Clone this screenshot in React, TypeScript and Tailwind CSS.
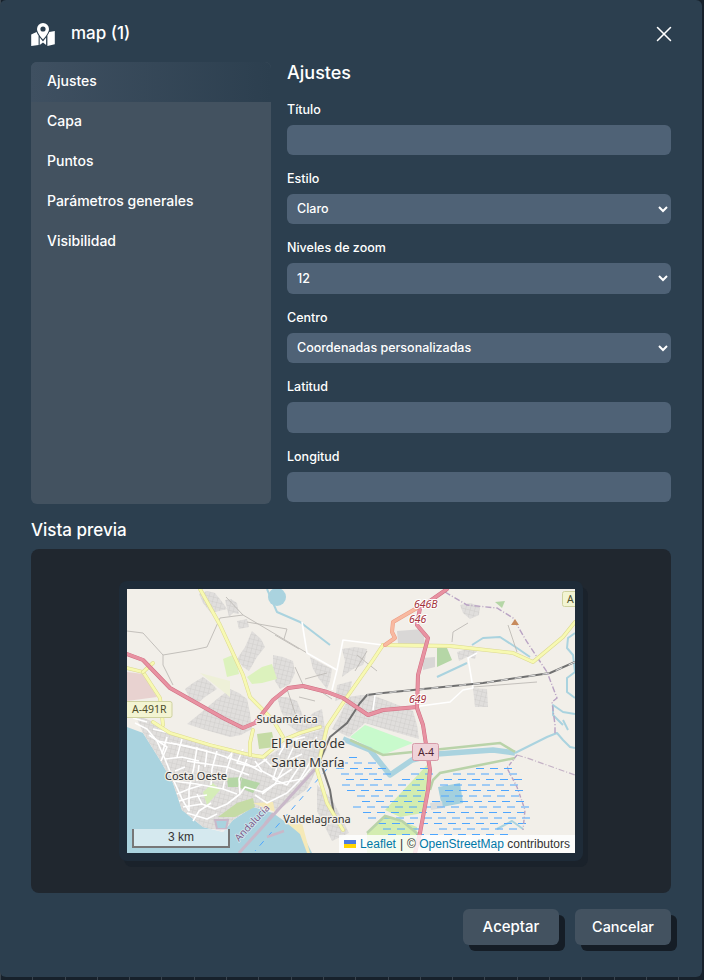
import { X } from "lucide-react";

const menuItems = ["Ajustes", "Capa", "Puntos", "Parámetros generales", "Visibilidad"];

const fields = [
  { label: "Título" },
  { label: "Estilo", value: "Claro" },
  { label: "Niveles de zoom", value: "12" },
  { label: "Centro", value: "Coordenadas personalizadas" },
  { label: "Latitud" },
  { label: "Longitud" },
];

const greyAreas = [
  "72,5 80,2 88,4 96,14 100,20 92,22 84,24 76,14",
  "98,11 104,10 110,14 112,25 106,24 102,28",
  "110,32 120,30 122,38 112,40",
  "125,42 134,50 138,58 130,68 122,82 116,78 110,70 118,58",
  "146,66 156,68 166,72 168,84 163,95 153,100 148,92 146,84",
  "183,68 194,74 205,80 203,92 200,100 192,90 186,80",
  "215,60 228,58 240,60 238,70 236,76 226,80 215,88 218,72",
  "58,100 66,94 76,88 84,94 90,100 78,108 70,115 62,108",
  "103,100 112,104 120,110 123,124 125,140 114,146 103,148 82,142 60,135 76,122 90,110",
  "222,108 234,106 245,106 266,114 286,122 290,136 292,150 264,142 238,134 222,148 205,140 214,124",
  "346,99 360,100 361,118 348,118",
  "330,63 340,60 350,62 348,70 340,68 332,72",
  "333,16 343,14 353,17 352,26 343,30 336,24",
  "150,108 160,108 170,112 178,132 186,124 195,120 198,140 186,142 175,146 160,135 154,122",
  "8,125 26,133 43,144 83,156 123,166 143,166 175,146 198,140 200,160 180,200 150,222 126,218 106,231 96,243 76,238 55,221 46,194 33,171 16,144",
  "190,196 205,210 222,244 205,252 190,222",
  "210,96 225,92 222,108 208,112",
];

const parks = [
  { pts: "96,70 108,65 112,85 100,88", fill: "#dcf2bd" },
  { pts: "120,88 135,78 145,75 150,90 135,94 125,95", fill: "#dcf2bd" },
  { pts: "73,84 103,92 103,108", fill: "#eef0d8" },
  { pts: "310,59 320,59 325,71 310,78", fill: "#b5d6a6" },
  { pts: "368,13 378,12 375,19", fill: "#b5d6a6" },
  { pts: "130,145 145,143 148,158 132,160", fill: "#c5dba5" },
  { pts: "223,148 238,136 286,154 256,166", fill: "#c8facc" },
  { pts: "300,176 258,221 273,228 296,224 303,198", fill: "#d3edb0" },
  { pts: "240,244 258,226 290,238 288,264 240,264", fill: "#d3edb0" },
  { pts: "100,189 115,188 111,198 101,198", fill: "#b5d6a6" },
  { pts: "115,189 133,194 126,204 113,199", fill: "#b5d6a6" },
  { pts: "76,203 86,194 93,201 80,216", fill: "#d5edb8" },
  { pts: "91,228 110,214 126,209 128,218 108,228 95,228", fill: "#c5dba5" },
  { pts: "126,214 146,213 148,223", fill: "#f5e9b8" },
  { pts: "160,234 175,234 183,264 180,264 173,245", fill: "#f5e9b8" },
];

const whiteStreets = [
  "8,134 20,140 30,152 38,170 46,190 55,210 62,222",
  "26,140 60,148 95,158 125,168",
  "30,152 60,157 90,165 120,175 135,183",
  "38,170 55,168 72,172",
  "46,192 70,195 96,200 110,205",
  "50,205 62,200 75,196",
  "56,218 75,215 88,220 100,215 113,205 118,198 135,203 148,195",
  "60,224 80,230 90,225",
  "70,158 67,178 62,200 62,222",
  "90,162 85,180 84,196",
  "120,170 112,190 113,205",
  "128,172 135,182 150,190 165,180",
  "135,168 145,178 160,172 175,165",
  "170,150 160,172 148,195 135,205",
  "148,195 175,190 195,165",
  "180,160 190,148",
  "40,148 35,165",
  "55,150 50,168",
  "105,165 100,180 96,200",
  "70,205 75,215",
  "6,129 20,133",
  "22,146 40,158 34,172",
  "44,154 80,162 78,178",
  "60,172 100,178 122,186",
  "48,182 58,178",
  "72,176 70,192",
  "52,212 66,208 80,206",
  "66,232 72,222 84,214",
  "100,170 108,160",
  "116,160 110,174 128,178 140,170",
  "150,178 146,190 160,196 172,178",
  "128,206 140,214 160,204",
  "160,204 172,192 186,168",
  "152,166 160,152 178,148",
  "175,33 180,64 210,81 205,101",
  "210,81 216,51 256,56",
  "286,118 323,113 336,101 346,99 341,69 350,64",
  "248,106 246,121",
];

const thinTracks = [
  "0,42 16,44 36,66 66,61 80,58 93,29 116,26",
  "36,66 36,76 46,96",
  "138,39 180,64",
  "120,33 160,40 157,50",
  "99,8 116,26 138,39",
  "148,46 172,60",
  "325,53 326,43 341,34",
  "381,36 390,63",
  "346,98 410,93",
  "160,100 170,130",
  "190,100 205,110",
  "172,108 188,112",
  "178,90 200,84",
  "168,78 178,100",
  "230,66 250,82",
  "240,62 228,82",
];

const streams = [
  "140,0 150,23 173,33 203,56",
  "310,88 340,74",
  "345,56 356,49 373,48 390,59 403,68",
  "388,164 400,158 420,148 430,144 436,151 443,158 448,159",
  "441,141 436,131",
  "448,44 441,49 440,59 446,66 448,83 440,89 440,103 448,109",
  "448,125 436,123 426,116 426,126 436,136",
  "396,240 385,232 370,240",
];

const marshEast = [[311, 186], [380, 172], [383, 180], [390, 198], [398, 221], [396, 240], [370, 248], [303, 250], [303, 205]];
const marshWest = [[204, 180], [216, 164], [245, 172], [262, 192], [290, 172], [300, 178], [296, 250], [250, 246], [230, 226], [215, 200]];

function inPolygon(x: number, y: number, poly: number[][]) {
  let inside = false;
  for (let i = 0, j = poly.length - 1; i < poly.length; j = i++) {
    const [xi, yi] = poly[i];
    const [xj, yj] = poly[j];
    if (yi > y !== yj > y && x < ((xj - xi) * (y - yi)) / (yj - yi) + xi) inside = !inside;
  }
  return inside;
}

const marshDashes: { x: number; y: number }[] = [];
for (let row = 0; row < 17; row++) {
  for (let col = 0; col < 16; col++) {
    const x = 198 + col * 14 + (row % 2) * 7 + ((row * 3 + col * 5) % 5);
    const y = 163 + row * 5.5;
    if (inPolygon(x, y, marshEast) || inPolygon(x, y, marshWest)) marshDashes.push({ x, y });
  }
}

function Road({ pts, color, casing, width }: { pts: string; color: string; casing: string; width: number }) {
  return (
    <g fill="none" strokeLinecap="round" strokeLinejoin="round">
      <polyline points={pts} stroke={casing} strokeWidth={width + 1} />
      <polyline points={pts} stroke={color} strokeWidth={width} />
    </g>
  );
}

function MapLabel({ x, y, size, children }: { x: number; y: number; size: number; children: string }) {
  return (
    <text x={x} y={y} fontSize={size} fill="#333" stroke="#f2efe9" strokeWidth={2.5} paintOrder="stroke" textAnchor="middle" fontFamily="'Noto Sans', sans-serif">
      {children}
    </text>
  );
}

function RoadRef({ x, y, children }: { x: number; y: number; children: string }) {
  return (
    <text x={x} y={y} fontSize={10.5} fontStyle="italic" fill="#a5343c" stroke="#fff" strokeWidth={2} paintOrder="stroke" fontFamily="'Noto Sans', sans-serif">
      {children}
    </text>
  );
}

function MapDrawing() {
  return (
    <svg viewBox="0 0 448 264" className="block h-[264px] w-[448px]">
      <defs>
        <pattern id="hatch" width="4.5" height="4.5" patternUnits="userSpaceOnUse" patternTransform="rotate(14)">
          <rect width="4.5" height="4.5" fill="#e0dedc" />
          <path d="M0 0H4.5M0 0V4.5" stroke="#cbc9c7" strokeWidth="0.8" />
        </pattern>
      </defs>
      <rect width="448" height="264" fill="#f2efe9" />

      {/* sea and bay */}
      <polygon points="0,138 16,144 33,171 46,194 55,221 76,238 96,243 106,231 126,218 146,224 160,234 176,246 185,264 0,264" fill="#aad3df" />
      <circle cx="150" cy="8" r="9" fill="#aad3df" />
      <polygon points="0,83 16,85 30,108 0,112" fill="#e8d2d0" />

      {greyAreas.map((pts) => (
        <polygon key={pts} points={pts} fill="url(#hatch)" />
      ))}
      <polygon points="270,42 296,40 298,55 271,55" fill="#d9d7d6" />
      <polygon points="295,69 308,68 308,78 296,81" fill="#d9d7d6" />
      {parks.map((p) => (
        <polygon key={p.pts} points={p.pts} fill={p.fill} />
      ))}

      {/* water */}
      <polyline points="216,150 243,161 263,186 285,171 310,165 366,161 388,164" fill="none" stroke="#aad3df" strokeWidth="5.5" strokeLinejoin="round" />
      {streams.map((pts) => (
        <polyline key={pts} points={pts} fill="none" stroke="#aad3df" strokeWidth="2" strokeLinejoin="round" />
      ))}
      <polygon points="311,198 333,194 336,214 315,218" fill="#a4d0de" />
      <polygon points="303,214 315,212 316,219 304,221" fill="#d9dcdc" />
      {marshDashes.map((d) => (
        <line key={`${d.x}-${d.y}`} x1={d.x} y1={d.y} x2={d.x + 8} y2={d.y} stroke="#4da6ff" strokeWidth="1" />
      ))}

      {/* levees */}
      <polyline points="223,151 256,166 286,163 373,154 388,163" fill="none" stroke="#b9d3a9" strokeWidth="2.5" />
      <polyline points="388,169 313,184 306,191 303,201" fill="none" stroke="#b9d3a9" strokeWidth="2.5" />
      <polyline points="240,244 258,227 275,232 292,246" fill="none" stroke="#b9d3a9" strokeWidth="2.5" />

      {/* streets */}
      {thinTracks.map((pts) => (
        <polyline key={pts} points={pts} fill="none" stroke="#bdbab5" strokeWidth="0.9" />
      ))}
      {whiteStreets.map((pts) => (
        <polyline key={pts} points={pts} fill="none" stroke="#fff" strokeWidth="1.6" strokeLinejoin="round" />
      ))}

      {/* port and river mouth */}
      <polyline points="190,178 150,222 112,264" fill="none" stroke="#c9b8c9" strokeWidth="3" />
      <polyline points="200,180 165,220 128,262" fill="none" stroke="#4da6ff" strokeWidth="1" strokeDasharray="6 6" />
      <polyline points="138,234 146,224" fill="none" stroke="#c9b8c9" strokeWidth="2" />
      <polyline points="140,248 157,242" fill="none" stroke="#c9b8c9" strokeWidth="2.5" />
      <polygon points="88,231 101,231 99,240 90,240" fill="#aad3df" stroke="#c9b8c9" strokeWidth="2" />

      {/* railway */}
      <polyline points="448,73 423,84 356,94 256,104 240,106 233,114 220,134 203,148 193,171 203,201 208,232" fill="none" stroke="#707070" strokeWidth="2" />
      <polyline points="448,73 423,84 356,94 256,104 240,106" fill="none" stroke="#fff" strokeWidth="0.8" strokeDasharray="7 7" />

      {/* boundaries */}
      <polyline points="318,3 340,16 370,19 386,29 400,53 420,83 430,109 425,113 428,136 428,146" fill="none" stroke="#b9a3c4" strokeWidth="1.4" strokeDasharray="6 2 1 2" />
      <polyline points="390,166 380,179 390,198 398,221 396,241" fill="none" stroke="#b9a3c4" strokeWidth="1.4" strokeDasharray="4 2 1 2" />
      <polyline points="390,166 400,169 448,186" fill="none" stroke="#c4b2c6" strokeWidth="1.2" strokeDasharray="6 2 1 2" />
      <polygon points="384,36 388,30 392,36" fill="#c78a5c" />

      {/* main roads */}
      <Road pts="73,0 93,36 116,86 123,108 146,131 156,148" color="#f7f9b2" casing="#dcd98f" width={2.8} />
      <Road pts="0,79 16,83 33,109 36,136" color="#f7f9b2" casing="#dcd98f" width={2.8} />
      <Road pts="16,83 26,74" color="#f7f9b2" casing="#dcd98f" width={2.8} />
      <Road pts="26,133 43,144 83,156 123,166 136,168 156,151 173,144 193,138" color="#f7f9b2" casing="#dcd98f" width={2.8} />
      <Road pts="123,166 123,154 126,141" color="#f7f9b2" casing="#dcd98f" width={2.8} />
      <Road pts="256,56 323,57 386,64 406,73 436,48 448,33" color="#f7f9b2" casing="#dcd98f" width={2.8} />
      <Road pts="256,56 246,71 220,108 200,138 190,181 200,214 216,241" color="#f7f9b2" casing="#dcd98f" width={2.8} />
      <Road pts="290,19 266,33 265,43 268,49 258,56" color="#f8b9a0" casing="#ec9c84" width={3} />
      <Road pts="0,65 16,71 43,99 96,129 116,139 128,134 146,111 161,99 176,97 200,103 216,109 241,126 256,121 290,118" color="#e892a2" casing="#cf6f82" width={3} />
      <Road pts="320,0 293,19 290,36 301,49 291,86 290,119 296,136 303,181 301,201 293,244 288,264" color="#e892a2" casing="#cf6f82" width={3} />

      <RoadRef x={287} y={19}>646B</RoadRef>
      <RoadRef x={282} y={34}>646</RoadRef>
      <RoadRef x={282} y={114}>649</RoadRef>
      <MapLabel x={160} y={134} size={11}>Sudamérica</MapLabel>
      <MapLabel x={181} y={159} size={13}>El Puerto de</MapLabel>
      <MapLabel x={181} y={178} size={13}>Santa María</MapLabel>
      <MapLabel x={69} y={191} size={11}>Costa Oeste</MapLabel>
      <MapLabel x={190} y={234} size={11}>Valdelagrana</MapLabel>
      <text x={0} y={0} transform="translate(112 253) rotate(-47)" fontSize="10" fill="#7d5f8c" stroke="#fff" strokeWidth="1.5" strokeOpacity="0.5" paintOrder="stroke" fontFamily="'Noto Sans', sans-serif">
        Andalucía
      </text>

      {/* road shields */}
      <rect x="-3" y="112.5" width="48" height="16" rx="2" fill="#f3f4d2" stroke="#cfd2a0" />
      <text x="5" y="124" fontSize="10.5" fill="#4d4d2a" fontFamily="'Noto Sans', sans-serif">A-491R</text>
      <rect x="285.5" y="154.5" width="26" height="17" rx="2" fill="#efd3d9" stroke="#d69aa8" />
      <text x="291" y="167" fontSize="10.5" fill="#4d2432" fontFamily="'Noto Sans', sans-serif">A-4</text>
      <rect x="435.5" y="2.5" width="24" height="15" rx="2" fill="#f3f4d2" stroke="#cfd2a0" />
      <text x="440" y="14" fontSize="10.5" fill="#4d4d2a" fontFamily="'Noto Sans', sans-serif">A</text>
    </svg>
  );
}

export default function App() {
  return (
    <div className="h-[980px] w-[704px] overflow-hidden bg-[#17212b] bg-[repeating-linear-gradient(90deg,#3a444e_0_1px,transparent_1px_32.3px)] font-['Inter',sans-serif]">
      <div className="h-[977px] w-[702px] rounded-md bg-[#2c3f4f] px-[31px] text-white">
        {/* Header */}
        <div className="flex h-[62px] items-start justify-between pt-4">
          <div className="flex h-9 items-center gap-4">
            <svg viewBox="0 0 24 24" className="h-6 w-6" fill="#fff">
              <path d="M12 1a6 6 0 0 0-6 6c0 3.6 4 8.2 6 10.6 2-2.4 6-7 6-10.6a6 6 0 0 0-6-6Zm0 3.4a2.6 2.6 0 1 1 0 5.2 2.6 2.6 0 0 1 0-5.2Z" fillRule="evenodd" />
              <path d="M0.2 12.5 5.6 10c.5 1.3 1.2 2.5 2 3.7V23L.2 23.9ZM16.4 13.6c.8-1.1 1.4-2.3 1.9-3.5l5.5-1.2V22.2l-7.4 1.7ZM8.7 15.2c1.1 1.5 2.2 2.9 3.3 4.2 1-1.2 2-2.5 3.1-4V23l-3.1-2.4L8.7 23Z" />
            </svg>
            <span className="text-[17px] font-medium">map (1)</span>
          </div>
          <button className="mt-[5px] flex h-[26px] w-[26px] translate-x-[6px] items-center justify-center">
            <X size={26} strokeWidth={1.4} />
          </button>
        </div>

        {/* Settings */}
        <div className="flex gap-4">
          <div className="h-[442px] w-60 overflow-hidden rounded-md bg-[#435260]">
            {menuItems.map((item, i) => (
              <div
                key={item}
                className={
                  i === 0
                    ? "flex h-10 items-center bg-gradient-to-r from-[#3f5061] to-[#2c3f4f] px-4 pb-0.5 text-sm font-medium"
                    : "flex h-10 items-center px-4 pb-0.5 text-sm font-medium"
                }
              >
                {item}
              </div>
            ))}
          </div>
          <div className="flex-1">
            <h2 className="mb-[12.6px] h-[22px] text-lg leading-[22px] font-medium">Ajustes</h2>
            {fields.map((field) => (
              <div key={field.label} className="mb-[11px] last:mb-0">
                <label className="mb-1 block h-6 text-[12.5px] leading-[26px] font-medium">{field.label}</label>
                {field.value ? (
                  <select
                    defaultValue={field.value}
                    className="block h-[30.4px] w-full rounded-md border-0 bg-[#4f6276] px-1.5 pb-px text-[12.5px] font-medium text-white outline-none [color-scheme:dark]"
                  >
                    <option>{field.value}</option>
                  </select>
                ) : (
                  <input className="block h-[30.4px] w-full rounded-md bg-[#4f6276] px-2.5 text-[13px] outline-none" />
                )}
              </div>
            ))}
          </div>
        </div>

        {/* Preview */}
        <h2 className="mt-4 mb-[9px] h-5 text-[17px] leading-5 font-medium">Vista previa</h2>
        <div className="flex h-[344px] items-center justify-center rounded-lg bg-[#20272f]">
          <div className="rounded-lg bg-[#1e2b38] p-2 shadow-[5px_6px_0_#1a222b]">
            <div className="relative h-[264px] w-[448px] overflow-hidden">
              <MapDrawing />
              <div className="absolute bottom-[5px] left-[5px] h-[19px] w-[98px] border-[2px] border-t-0 border-[#777] bg-white/50 text-center font-['Liberation_Sans',sans-serif] text-xs leading-[17px] text-[#333]">
                3 km
              </div>
              <div className="absolute right-0 bottom-0 flex h-[18px] items-center bg-white/80 px-[5px] font-['Liberation_Sans',sans-serif] text-xs text-[#333]">
                <svg viewBox="0 0 12 8" className="mr-1 h-2 w-3">
                  <rect width="12" height="4" fill="#4c7be1" />
                  <rect y="4" width="12" height="4" fill="#ffd500" />
                </svg>
                <span className="text-[#0078a8]">Leaflet</span>
                <span className="mx-1">|</span>
                <span>©&nbsp;</span>
                <span className="text-[#0078a8]">OpenStreetMap</span>
                <span>&nbsp;contributors</span>
              </div>
            </div>
          </div>
        </div>

        {/* Footer */}
        <div className="mt-4 flex justify-end gap-4">
          <button className="h-9 w-24 rounded-md bg-[#435260] text-[15px] font-medium shadow-[6px_6px_0_#151d26]">Aceptar</button>
          <button className="h-9 w-24 rounded-md bg-[#435260] text-[14.5px] font-medium shadow-[6px_6px_0_#151d26]">Cancelar</button>
        </div>
      </div>
    </div>
  );
}
